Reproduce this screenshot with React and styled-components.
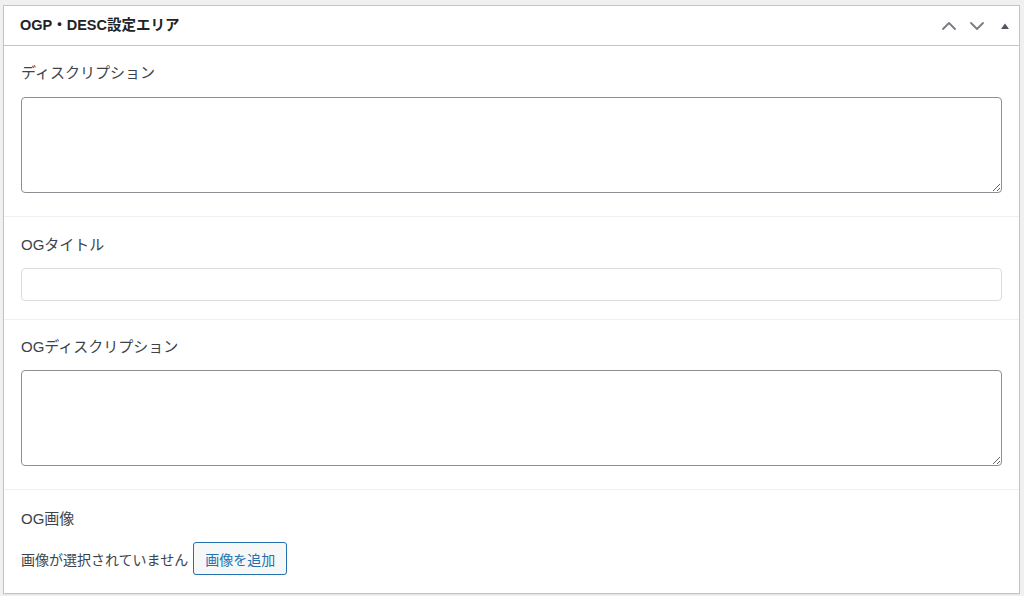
import React from "react";
import styled, { createGlobalStyle } from "styled-components";

const FONT = `"Liberation Sans", "Noto Sans CJK JP", sans-serif`;

const Global = createGlobalStyle`
  html, body { margin: 0; padding: 0; background: #f0f0f1; }
  body { font-family: ${FONT}; color: #3c434a; }
  * { box-sizing: border-box; }
`;

const Page = styled.div`
  padding: 5px 4px 0 3px;
  height: 596px;
`;

const Panel = styled.div`
  background: #fff;
  border: 1px solid #c3c4c7;
  box-shadow: 0 1px 1px rgba(0,0,0,0.04);
`;

const Header = styled.div`
  height: 40px;
  display: flex;
  align-items: center;
  justify-content: space-between;
  border-bottom: 1px solid #c3c4c7;
  padding-left: 16px;
  padding-right: 0;
`;

const Title = styled.h2`
  margin: 0;
  font-size: 14.5px;
  font-weight: 700;
  color: #1d2327;
  font-family: ${FONT};
  line-height: 1.4;
`;

const Actions = styled.div`
  display: flex;
  align-items: center;
`;

const IconButton = styled.button`
  width: 28px;
  height: 36px;
  border: none;
  background: none;
  padding: 0;
  display: flex;
  align-items: center;
  justify-content: center;
  color: #787c82;
  cursor: pointer;
`;

const Section = styled.div`
  padding: ${(p) => p.$top ?? 16}px 17px ${(p) => p.$bottom}px 17px;
  border-top: ${(p) => (p.$first ? "none" : "1px solid #f0f0f1")};
`;

const Label = styled.div`
  font-size: 15px;
  line-height: 22px;
  color: #3c434a;
  margin-bottom: ${(p) => p.$gap ?? 13}px;
`;

const TextArea = styled.textarea`
  display: block;
  width: 100%;
  height: 96px;
  border: 1px solid #8c8f94;
  border-radius: 4px;
  padding: 4px 8px;
  font-size: 14px;
  margin: 0;
`;

const Input = styled.input`
  display: block;
  width: 100%;
  height: 33px;
  border: 1px solid #dcdcde;
  border-radius: 4px;
  padding: 0 8px;
  font-size: 14px;
  margin: 0;
`;

const Row = styled.div`
  display: flex;
  align-items: center;
  gap: 5px;
  font-size: 14px;
  color: #3c434a;
`;

const Button = styled.button`
  height: 33px;
  padding: 0 11px;
  border: 1px solid #2271b1;
  border-radius: 3px;
  background: #f6f7f7;
  color: #2271b1;
  font-size: 14px;
  font-family: ${FONT};
  cursor: pointer;
`;

const Chevron = ({ up }) => (
  <svg width="16" height="16" viewBox="0 0 16 16" fill="none">
    <path
      d={up ? "M2 11 L8 5 L14 11" : "M2 5 L8 11 L14 5"}
      stroke="currentColor"
      strokeWidth="1.8"
      strokeLinecap="round"
      strokeLinejoin="round"
    />
  </svg>
);

const Tri = () => (
  <svg width="10" height="10" viewBox="0 0 10 10">
    <path d="M1 8 L5 2.5 L9 8 Z" fill="#50575e" />
  </svg>
);

export default function App() {
  return (
    <>
      <Global />
      <Page>
        <Panel>
          <Header>
            <Title>OGP・DESC設定エリア</Title>
            <Actions>
              <IconButton aria-label="上へ移動"><Chevron up /></IconButton>
              <IconButton aria-label="下へ移動"><Chevron /></IconButton>
              <IconButton aria-label="パネルを切り替え"><Tri /></IconButton>
            </Actions>
          </Header>
          <Section $first $bottom={23}>
            <Label>ディスクリプション</Label>
            <TextArea />
          </Section>
          <Section $top={17} $bottom={18}>
            <Label $gap={12}>OGタイトル</Label>
            <Input type="text" />
          </Section>
          <Section $top={16} $bottom={23}>
            <Label $gap={12}>OGディスクリプション</Label>
            <TextArea />
          </Section>
          <Section $top={18} $bottom={18}>
            <Label $gap={12}>OG画像</Label>
            <Row>
              画像が選択されていません
              <Button>画像を追加</Button>
            </Row>
          </Section>
        </Panel>
      </Page>
    </>
  );
}
